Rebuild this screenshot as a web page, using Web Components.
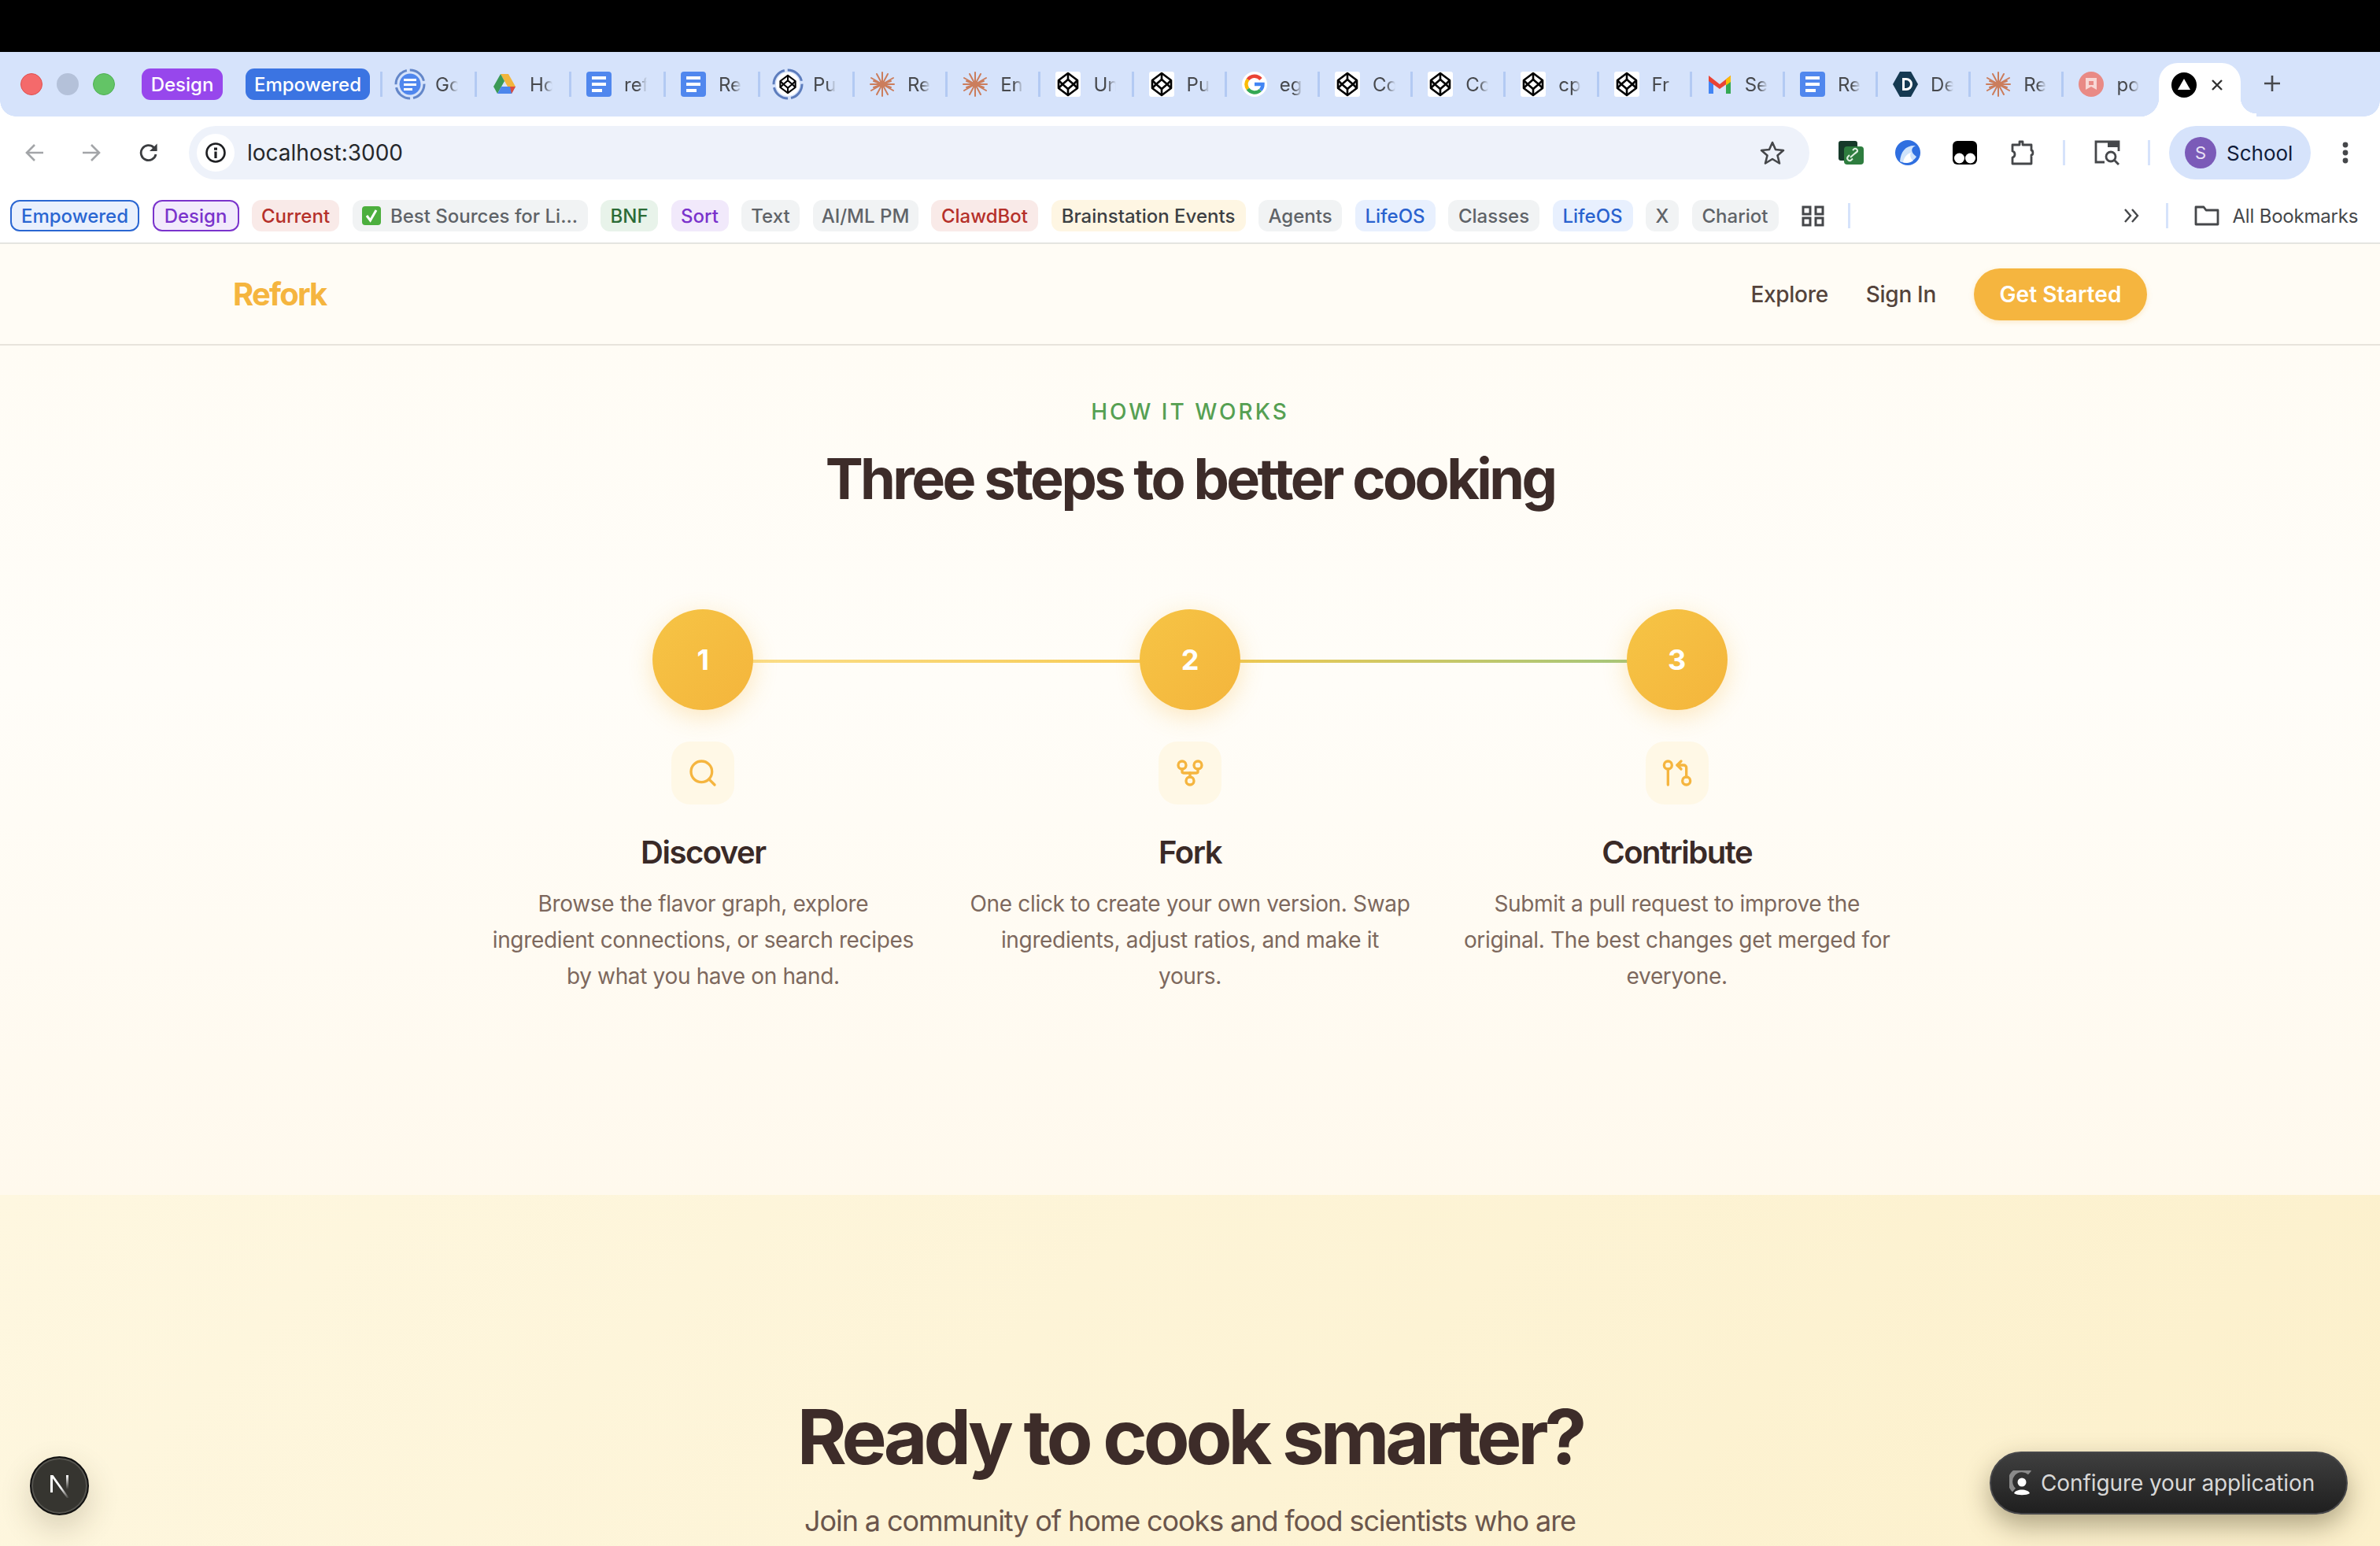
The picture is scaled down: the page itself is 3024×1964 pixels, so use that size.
<!DOCTYPE html>
<html>
<head>
<meta charset="utf-8">
<title>Refork</title>
<style>
    html,body{ margin:0; padding:0; background:#000; }
    body{ width:3024px; height:1964px; overflow:hidden; font-family:Inter,"Noto Sans",sans-serif; position:relative; }
    .top{ height:66px; background:#000; }
</style>
</head>
<body>
<div class="top"></div>
<browser-tabs>
    <win-dots></win-dots>
    <group-chip color="#9747ec" w="103">Design</group-chip>
    <group-chip color="#3b74e2" w="158" gap="29">Empowered</group-chip>
    <browser-tab icon="gdoc" w="120" first>Google</browser-tab>
    <browser-tab icon="drive" w="120">Home</browser-tab>
    <browser-tab icon="doc" w="120">ref</browser-tab>
    <browser-tab icon="doc" w="120">Re</browser-tab>
    <browser-tab icon="ringpen" w="120">Pu</browser-tab>
    <browser-tab icon="claude" w="118.2">Re</browser-tab>
    <browser-tab icon="claude" w="118.2">En</browser-tab>
    <browser-tab icon="pen" w="118.2">Un</browser-tab>
    <browser-tab icon="pen" w="118.2">Pu</browser-tab>
    <browser-tab icon="google" w="118.2">eg</browser-tab>
    <browser-tab icon="pen" w="118.2">Co</browser-tab>
    <browser-tab icon="pen" w="118.2">Co</browser-tab>
    <browser-tab icon="pen" w="118.2">cp</browser-tab>
    <browser-tab icon="pen" w="118.2">Fr</browser-tab>
    <browser-tab icon="gmail" w="118.2">Se</browser-tab>
    <browser-tab icon="doc" w="118.2">Re</browser-tab>
    <browser-tab icon="dhex" w="118.2">De</browser-tab>
    <browser-tab icon="claude" w="118.2">Re</browser-tab>
    <browser-tab icon="pink" w="118.2">po</browser-tab>
    <active-tab></active-tab>
</browser-tabs>
<browser-toolbar url="localhost:3000" profile="School"></browser-toolbar>
<bookmark-bar>
    <book-mark kind="oblue" w="164">Empowered</book-mark>
    <book-mark kind="opurple" w="110">Design</book-mark>
    <book-mark kind="red" w="111">Current</book-mark>
    <book-mark kind="gray" w="299" check>Best Sources for Li...</book-mark>
    <book-mark kind="green" w="73">BNF</book-mark>
    <book-mark kind="purple" w="73">Sort</book-mark>
    <book-mark kind="gray" w="74">Text</book-mark>
    <book-mark kind="gray" w="134">AI/ML PM</book-mark>
    <book-mark kind="red" w="136">ClawdBot</book-mark>
    <book-mark kind="yellow" w="247">Brainstation Events</book-mark>
    <book-mark kind="gray" w="106">Agents</book-mark>
    <book-mark kind="blue" w="102">LifeOS</book-mark>
    <book-mark kind="gray" w="116">Classes</book-mark>
    <book-mark kind="blue" w="102">LifeOS</book-mark>
    <book-mark kind="gray" w="42">X</book-mark>
    <book-mark kind="gray" w="110">Chariot</book-mark>
</bookmark-bar>
<site-header></site-header>
<how-it-works>
    <step-card num="1" icon="search" title="Discover">Browse the flavor graph, explore<br>ingredient connections, or search recipes<br>by what you have on hand.</step-card>
    <step-card num="2" icon="fork" title="Fork">One click to create your own version. Swap<br>ingredients, adjust ratios, and make it<br>yours.</step-card>
    <step-card num="3" icon="pull" title="Contribute">Submit a pull request to improve the<br>original. The best changes get merged for<br>everyone.</step-card>
</how-it-works>
<cta-section></cta-section>
<dev-badge></dev-badge>
<config-pill>Configure your application</config-pill>

<script>
// favicons, all drawn on a 32 box
const penPaths = `<rect width="32" height="32" rx="3" fill="#fff"/><g fill="none" stroke="#000" stroke-width="2.6" stroke-linejoin="round"><path d="M16 2 28 11V21L16 30 4 21V11Z"/><path d="M16 10 23 16 16 22 9 16Z"/><path d="M16 2V10M16 22V30M4 11 9 16M28 11 23 16M4 21 9 16M28 21 23 16"/></g>`;
const favicons = {
    doc:`<rect width="32" height="32" rx="4" fill="#5087ee"/><path d="M7 6H25V10H7ZM7 14H25V18H7ZM7 22H20V26H7Z" fill="#fff"/>`,
    gdoc:`<svg x="-4" y="-4" width="40" height="40" viewBox="0 0 40 40"><circle cx="20" cy="20" r="18" fill="none" stroke="#6487c9" stroke-width="3" stroke-dasharray="24 4"/><circle cx="20" cy="20" r="13.5" fill="#5087ee"/><path d="M12 13H28V16H12ZM12 19H28V22H12ZM12 25H23V28H12Z" fill="#fff"/></svg>`,
    drive:`<path d="M11 3H21L30 19H20Z" fill="#f2b53b"/><path d="M11 3 2 19 7 28 16 12Z" fill="#3b9a55"/><path d="M7 28H25L30 19H12Z" fill="#4c86ec"/><path d="M25 28 30 19H23Z" fill="#df4b3c"/>`,
    claude:`<g stroke="#cb7d5c" stroke-width="2" stroke-linecap="round"><path d="M16 1V31M9 3 23 29M23 3 9 29M2 8 30 24M30 8 2 24M1 16H31M5 12 27 20M27 12 5 20"/></g>`,
    pen:penPaths,
    ringpen:`<svg x="-4" y="-4" width="40" height="40" viewBox="0 0 40 40"><circle cx="20" cy="20" r="18" fill="none" stroke="#5d7dbd" stroke-width="3" stroke-dasharray="24 4"/><svg x="4" y="4" width="32" height="32" viewBox="0 0 32 32"><circle cx="16" cy="16" r="15" fill="#fff"/><g transform="translate(3.2 3.2) scale(.8)">${penPaths.replace(/<rect[^>]*>/,'')}</g></svg></svg>`,
    google:`<circle cx="16" cy="16" r="16" fill="#fff"/><g fill="none" stroke-width="4.4"><path d="M24 9.5A10.5 10.5 0 0 0 7.5 10" stroke="#ea4335"/><path d="M7.5 10A10.5 10.5 0 0 0 7.5 22" stroke="#fbbc05"/><path d="M7.5 22A10.5 10.5 0 0 0 23.5 23.5" stroke="#34a853"/><path d="M23.5 23.5C25.5 21.5 26.5 19 26.5 16H16" stroke="#4285f4"/></g>`,
    gmail:`<path d="M2 8V28H8V14Z" fill="#4285f4"/><path d="M30 8V28H24V14Z" fill="#34a853"/><path d="M2 5 16 16 30 5V12L16 22 2 12Z" fill="#ea4335"/><path d="M24 9.7 30 5V13L24 17.5Z" fill="#fbbc05"/>`,
    dhex:`<path d="M9 0H23L32 16 23 32H9L0 16Z" fill="#163a52"/><path d="M12 8H17A8 8 0 0 1 17 24H12ZM15 11V21H17A5 5 0 0 0 17 11Z" fill="#fff"/>`,
    pink:`<circle cx="16" cy="16" r="16" fill="#e98a85"/><path d="M9 8H23V23L16 19 9 23Z" fill="#f8d8d5"/><path d="M13 12H19V17H13Z" fill="#e98a85"/>`
};
function favicon(name){
    return `<svg width="32" height="32" viewBox="0 0 32 32" style="overflow:visible;display:block">${favicons[name]}</svg>`;
}

class WinDots extends HTMLElement{
    constructor(){
        super();
        this.attachShadow({mode:'open'}).innerHTML = `
        <style>
            :host{ display:flex; gap:18px; margin:0 34px 0 26px; align-items:center; }
            i{ display:block; width:28px; height:28px; border-radius:50%; box-sizing:border-box; }
            .r{ background:#f46a6b; border:1px solid #e0504e; }
            .g{ background:#b4c1d9; }
            .v{ background:#63c466; border:1px solid #4fb054; }
        </style>
        <i class="r"></i><i class="g"></i><i class="v"></i>`;
    }
}
customElements.define('win-dots', WinDots);

class GroupChip extends HTMLElement{
    constructor(){
        super();
        this.attachShadow({mode:'open'}).innerHTML = `
        <style>
            :host{ display:flex; align-items:center; justify-content:center; height:40px; border-radius:11px; color:#fff; font-size:24px; font-weight:500; flex:none; }
        </style>
        <slot></slot>`;
    }
    connectedCallback(){
        this.style.background = this.getAttribute('color');
        this.style.width = this.getAttribute('w') + 'px';
        if(this.hasAttribute('gap')) this.style.marginLeft = this.getAttribute('gap') + 'px';
    }
}
customElements.define('group-chip', GroupChip);

class BrowserTab extends HTMLElement{
    constructor(){
        super();
        this.attachShadow({mode:'open'}).innerHTML = `
        <style>
            :host{ display:flex; align-items:center; height:32px; flex:none; box-sizing:border-box; border-left:3px solid #b3caf3; padding-left:19px; color:#47494d; font-size:24px; }
            #ic{ width:32px; height:32px; flex:none; margin-right:16px; }
            #lb{ width:29px; overflow:hidden; white-space:nowrap; -webkit-mask-image:linear-gradient(90deg,#000 60%,transparent); mask-image:linear-gradient(90deg,#000 60%,transparent); }
        </style>
        <div id="ic"></div><div id="lb"><slot></slot></div>`;
    }
    connectedCallback(){
        this.style.width = this.getAttribute('w') + 'px';
        this.shadowRoot.getElementById('ic').innerHTML = favicon(this.getAttribute('icon'));
        if(this.hasAttribute('first')) this.style.marginLeft = '13px';
    }
}
customElements.define('browser-tab', BrowserTab);

class ActiveTab extends HTMLElement{
    constructor(){
        super();
        this.attachShadow({mode:'open'}).innerHTML = `
        <style>
            :host{ position:relative; display:flex; align-items:flex-start; align-self:flex-end; box-sizing:border-box; width:104px; height:68px; margin-left:5px; padding:12px 0 0 16px; background:#fff; border-radius:24px 24px 0 0; flex:none; }
            :host::before,:host::after{ content:""; position:absolute; bottom:0; width:24px; height:24px; }
            :host::before{ left:-24px; background:radial-gradient(circle at 0 0,transparent 24px,#fff 24.5px); }
            :host::after{ right:-20px; width:20px; background:radial-gradient(circle at 100% 0,transparent 20px,#fff 20.5px); }
            .plus{ position:absolute; left:132px; top:14px; }
            svg{ display:block; flex:none; }
            .x{ margin:8px 0 0 18px; }
        </style>
        <svg width="32" height="32" viewBox="0 0 32 32"><circle cx="16" cy="16" r="16" fill="#000"/><path d="M16 8 24 22H8Z" fill="#fff"/></svg>
        <svg class="x" width="16" height="16" viewBox="0 0 16 16"><path d="M2 2 14 14M14 2 2 14" stroke="#333" stroke-width="2.4"/></svg>
        <svg class="plus" width="24" height="24" viewBox="0 0 24 24"><path d="M12 2V22M2 12H22" stroke="#47494d" stroke-width="2.6"/></svg>`;
    }
}
customElements.define('active-tab', ActiveTab);

class BrowserTabs extends HTMLElement{
    constructor(){
        super();
        this.attachShadow({mode:'open'}).innerHTML = `
        <style>
            :host{ display:flex; align-items:center; height:82px; background:#d6e3fb; box-sizing:border-box; }
        </style>
        <slot></slot>`;
    }
}
customElements.define('browser-tabs', BrowserTabs);

class BrowserToolbar extends HTMLElement{
    constructor(){
        super();
        this.attachShadow({mode:'open'}).innerHTML = `
        <style>
            :host{ display:flex; align-items:center; height:80px; box-sizing:border-box; padding:12px 0 0 32px; background:#fff; position:relative; }
            :host::before{ content:""; position:absolute; inset:-20px 0 auto 0; height:20px; pointer-events:none;
                background:radial-gradient(circle at 20px 0,transparent 19.5px,#fff 20px) left bottom/20px 20px no-repeat,
                           radial-gradient(circle at 0 0,transparent 19.5px,#fff 20px) right bottom/20px 20px no-repeat; }
            svg{ display:block; flex:none; }
            .bar{ display:flex; align-items:center; width:2059px; height:68px; box-sizing:border-box; margin-left:39px; padding:0 31px 0 10px; background:#eef2fa; border-radius:34px; flex:none; }
            .info{ width:48px; height:48px; border-radius:50%; background:#fff; display:flex; align-items:center; justify-content:center; flex:none; margin-right:16px; }
            .url{ font-size:28px; color:#26282b; flex:1; }
            .ext{ display:flex; align-items:center; }
            .sep{ width:3px; height:32px; background:#d6e3fb; flex:none; }
            .prof{ display:flex; align-items:center; width:180px; height:68px; box-sizing:border-box; padding-left:20px; margin-left:24px; border-radius:34px; background:#d6e3fb; color:#101c3a; font-size:26px; flex:none; }
            .av{ width:40px; height:40px; border-radius:50%; background:#7b5bb8; color:#e9e2f5; font-size:22px; display:flex; align-items:center; justify-content:center; margin-right:13px; flex:none; }
        </style>
        <svg width="24" height="24" viewBox="0 0 24 24"><path d="M23 12H2M12 2 2 12 12 22" fill="none" stroke="#a3a5a8" stroke-width="2.6"/></svg>
        <svg style="margin-left:48px" width="24" height="24" viewBox="0 0 24 24"><path d="M1 12H22M12 2 22 12 12 22" fill="none" stroke="#a3a5a8" stroke-width="2.6"/></svg>
        <svg style="margin-left:49px" width="24" height="26" viewBox="0 0 24 26"><path d="M21 15A9.5 9.5 0 1 1 18.5 6.5L21.5 9.5" fill="none" stroke="#3b3d40" stroke-width="2.8"/><path d="M22.6 1.5V11H13Z" fill="#3b3d40"/></svg>
        <div class="bar">
            <div class="info"><svg width="26" height="26" viewBox="0 0 26 26"><circle cx="13" cy="13" r="11.5" fill="none" stroke="#1e1f22" stroke-width="2.6"/><path d="M11 6.5H15V9.8H11ZM11.4 11.5H14.6V20H11.4Z" fill="#1e1f22"/></svg></div>
            <div class="url" id="url"></div>
            <svg width="32" height="32" viewBox="0 0 32 32"><path d="M16 3 20 12 30 13 22.5 19.5 25 29.5 16 24 7 29.5 9.5 19.5 2 13 12 12Z" fill="none" stroke="#45474a" stroke-width="2.6" stroke-linejoin="round"/></svg>
        </div>
        <div class="ext" style="margin-left:37px">
            <svg width="32" height="30" viewBox="0 0 32 30"><rect x="0" y="0" width="24" height="25" rx="3" fill="#163a2a"/><rect x="7" y="7" width="25" height="23" rx="4" fill="#2e7d3f"/><path d="M15 21 24 13M14 18 12 20A3 3 0 0 0 16.5 24L18 22.5M21 16 24 13.5A3 3 0 0 0 20 10L18 12" fill="none" stroke="#dff0e2" stroke-width="2"/></svg>
            <svg style="margin-left:40px" width="32" height="32" viewBox="0 0 32 32"><circle cx="16" cy="16" r="16" fill="#2f6fe0"/><path d="M6 27C7 14 14 6 26 7 19 10 20 16 27 21 23 28 13 31 6 27Z" fill="#cfe3fb"/><path d="M10 28C12 20 16 17 20 16 18 20 20 24 23 26 19 29 14 30 10 28Z" fill="#fff"/></svg>
            <svg style="margin-left:41px" width="31" height="30" viewBox="0 0 31 30"><rect width="31" height="30" rx="6" fill="#000"/><circle cx="8.5" cy="22" r="6.5" fill="#fff"/><circle cx="22.5" cy="22" r="6.5" fill="#fff"/></svg>
            <svg style="margin-left:42px" width="31" height="32" viewBox="0 0 31 32"><path d="M3 6H12V2H16V6H27V13C29.5 13 29.5 19 27 19V30H3V22C7 21 7 15 3 14Z" fill="none" stroke="#45474a" stroke-width="2.8" stroke-linejoin="round"/></svg>
        </div>
        <div class="sep" style="margin-left:36px"></div>
        <svg style="margin-left:36px" width="35" height="32" viewBox="0 0 35 32"><path d="M14 28H3V2H32V14" fill="none" stroke="#45474a" stroke-width="2.8"/><path d="M18 2H32V9H18Z" fill="#45474a"/><circle cx="22" cy="21" r="6" fill="none" stroke="#45474a" stroke-width="2.8"/><path d="M26.5 25.5 32 31" stroke="#45474a" stroke-width="2.8"/></svg>
        <div class="sep" style="margin-left:34px"></div>
        <div class="prof"><div class="av">S</div><span id="pn"></span></div>
        <svg style="margin-left:36px" width="16" height="32" viewBox="0 0 16 32"><circle cx="8" cy="6" r="3.4" fill="#45474a"/><circle cx="8" cy="16" r="3.4" fill="#45474a"/><circle cx="8" cy="26" r="3.4" fill="#45474a"/></svg>`;
    }
    connectedCallback(){
        this.shadowRoot.getElementById('url').textContent = this.getAttribute('url');
        this.shadowRoot.getElementById('pn').textContent = this.getAttribute('profile');
    }
}
customElements.define('browser-toolbar', BrowserToolbar);

class BookMark extends HTMLElement{
    constructor(){
        super();
        this.attachShadow({mode:'open'}).innerHTML = `
        <style>
            :host{ display:flex; align-items:center; justify-content:center; height:40px; box-sizing:border-box; border-radius:12px; font-size:24px; font-weight:500; flex:none; white-space:nowrap; }
            :host([kind=oblue]){ background:#e9f0fd; color:#2a66d2; border:2px solid #2a66d2; }
            :host([kind=opurple]){ background:#f2eafc; color:#7a33cc; border:2px solid #7a33cc; }
            :host([kind=red]){ background:#f9eae8; color:#b5302a; }
            :host([kind=gray]){ background:#f1f3f4; color:#5f6368; }
            :host([kind=green]){ background:#e8f3ea; color:#2b6b36; }
            :host([kind=purple]){ background:#f1e9fb; color:#7a33cc; }
            :host([kind=yellow]){ background:#fef6e3; color:#3c4043; }
            :host([kind=blue]){ background:#e8f0fe; color:#2a62cf; }
            svg{ display:none; margin-right:12px; flex:none; }
            :host([check]) svg{ display:block; }
        </style>
        <svg width="24" height="24" viewBox="0 0 24 24"><rect width="24" height="24" rx="4" fill="#4caf3e"/><path d="M6 12 10.5 18 18 5" fill="none" stroke="#fff" stroke-width="3"/></svg>
        <slot></slot>`;
    }
    connectedCallback(){
        this.style.width = this.getAttribute('w') + 'px';
    }
}
customElements.define('book-mark', BookMark);

class BookmarkBar extends HTMLElement{
    constructor(){
        super();
        this.attachShadow({mode:'open'}).innerHTML = `
        <style>
            :host{ display:flex; align-items:center; height:82px; box-sizing:border-box; padding:12px 0 0 13px; background:#fff; gap:16.5px; border-bottom:2px solid #e5e5e0; }
            svg{ display:block; flex:none; }
            .sep{ width:3px; height:32px; background:#d6e3fb; flex:none; }
            .all{ font-size:24px; color:#45474a; white-space:nowrap; letter-spacing:-.2px; }
        </style>
        <slot></slot>
        <svg style="margin-left:13px" width="29" height="27" viewBox="0 0 29 27"><path d="M2 2H11V11H2ZM18 2H27V11H18ZM2 16H11V25H2ZM18 16H27V25H18Z" fill="none" stroke="#45474a" stroke-width="3"/></svg>
        <div class="sep" style="margin-left:13px"></div>
        <svg style="margin-left:331px" width="20" height="20" viewBox="0 0 20 20"><path d="M2 2 9 10 2 18M11 2 18 10 11 18" fill="none" stroke="#45474a" stroke-width="2.4"/></svg>
        <div class="sep" style="margin-left:17px"></div>
        <svg style="margin-left:17px" width="32" height="26" viewBox="0 0 32 26"><path d="M2 2H12L15 6H30V24H2Z" fill="none" stroke="#45474a" stroke-width="2.8" stroke-linejoin="round"/></svg>
        <div class="all">All Bookmarks</div>`;
    }
}
customElements.define('bookmark-bar', BookmarkBar);

class SiteHeader extends HTMLElement{
    constructor(){
        super();
        this.attachShadow({mode:'open'}).innerHTML = `
        <style>
            :host{ display:block; background:#fffcf5; border-bottom:2px solid #e8e4dc; }
            .in{ display:flex; align-items:center; justify-content:space-between; box-sizing:border-box; width:2560px; height:127px; margin:0 auto; padding:0 64px; }
            .logo{ font-size:40px; font-weight:700; color:#f5b53f; letter-spacing:-1.8px; }
            nav{ display:flex; align-items:center; gap:48px; font-size:28px; font-weight:500; color:#54433b; letter-spacing:-.3px; }
            .btn{ display:flex; align-items:center; justify-content:center; width:220px; height:66px; border-radius:33px; background:#f5b53f; color:#fff; font-weight:600; letter-spacing:.1px; box-shadow:0 2px 6px rgba(245,181,63,.25); }
        </style>
        <div class="in">
            <div class="logo">Refork</div>
            <nav><span>Explore</span><span>Sign In</span><div class="btn">Get Started</div></nav>
        </div>`;
    }
}
customElements.define('site-header', SiteHeader);

const stepIcons = {
    search:`<circle cx="11" cy="11" r="8"/><path d="m21 21-4.3-4.3"/>`,
    fork:`<circle cx="12" cy="18" r="3"/><circle cx="6" cy="6" r="3"/><circle cx="18" cy="6" r="3"/><path d="M18 9v2c0 .6-.4 1-1 1H7c-.6 0-1-.4-1-1V9"/><path d="M12 12v3"/>`,
    pull:`<circle cx="5" cy="6" r="3"/><path d="M5 9v12"/><circle cx="19" cy="18" r="3"/><path d="m15 9-3-3 3-3"/><path d="M12 6h5a2 2 0 0 1 2 2v7"/>`
};

class StepCard extends HTMLElement{
    constructor(){
        super();
        this.attachShadow({mode:'open'}).innerHTML = `
        <style>
            :host{ display:flex; flex-direction:column; align-items:center; text-align:center; position:relative; z-index:1; min-width:0; }
            .num{ width:128px; height:128px; border-radius:50%; background:linear-gradient(135deg,#f6c445,#f4b53c); color:#fff; font-size:36px; font-weight:700; display:flex; align-items:center; justify-content:center; box-shadow:0 8px 30px rgba(245,181,60,.3); }
            .ico{ width:80px; height:80px; margin-top:40px; border-radius:24px; background:#fff8e6; display:flex; align-items:center; justify-content:center; }
            svg{ display:block; fill:none; stroke:#f5b53f; stroke-width:2; stroke-linecap:round; stroke-linejoin:round; }
            h3{ margin:31px 0 0; font-size:40px; line-height:60px; font-weight:600; color:#3a2a27; letter-spacing:-1.5px; }
            p{ margin:13px 0 0; font-size:28px; line-height:45.8px; color:#7d685d; white-space:nowrap; letter-spacing:-.34px; }
        </style>
        <div class="num" id="num"></div>
        <div class="ico" id="ico"></div>
        <h3 id="ttl"></h3>
        <p><slot></slot></p>`;
    }
    connectedCallback(){
        const r = this.shadowRoot;
        r.getElementById('num').textContent = this.getAttribute('num');
        r.getElementById('ttl').textContent = this.getAttribute('title');
        r.getElementById('ico').innerHTML = `<svg width="40" height="40" viewBox="0 0 24 24">${stepIcons[this.getAttribute('icon')]}</svg>`;
    }
}
customElements.define('step-card', StepCard);

class HowItWorks extends HTMLElement{
    constructor(){
        super();
        this.attachShadow({mode:'open'}).innerHTML = `
        <style>
            :host{ display:block; box-sizing:border-box; height:1079px; padding-top:64px; background:linear-gradient(180deg,#fffcf5,#fffdf8 40%,#fff9ed); text-align:center; }
            .eyebrow{ font-size:28px; line-height:40px; font-weight:500; letter-spacing:3px; color:#56a052; }
            h2{ margin:25px 0 0; font-size:72px; line-height:80px; font-weight:700; letter-spacing:-3.6px; color:#3d2c29; }
            .grid{ position:relative; display:grid; grid-template-columns:repeat(3,minmax(0,1fr)); gap:64px; width:1792px; margin:126px auto 0; }
            .line{ position:absolute; left:277px; right:277px; top:64px; height:4px; background:linear-gradient(90deg,#fbe08f,#f6c94f 50%,#9cc67f); }
        </style>
        <div class="eyebrow">HOW IT WORKS</div>
        <h2>Three steps to better cooking</h2>
        <div class="grid"><div class="line"></div><slot></slot></div>`;
    }
}
customElements.define('how-it-works', HowItWorks);

class CtaSection extends HTMLElement{
    constructor(){
        super();
        this.attachShadow({mode:'open'}).innerHTML = `
        <style>
            :host{ display:block; height:446px; overflow:hidden; box-sizing:border-box; padding-top:254px; background:linear-gradient(135deg,#fef7e0,#fcf0cb); text-align:center; }
            h2{ margin:0; font-size:96px; line-height:106px; font-weight:700; letter-spacing:-5px; color:#3d2c29; }
            p{ margin:25px 0 0; font-size:36px; line-height:58px; color:#6b564c; letter-spacing:-1.1px; }
        </style>
        <h2>Ready to cook smarter?</h2>
        <p>Join a community of home cooks and food scientists who are</p>`;
    }
}
customElements.define('cta-section', CtaSection);

class DevBadge extends HTMLElement{
    constructor(){
        super();
        this.attachShadow({mode:'open'}).innerHTML = `
        <style>
            :host{ position:absolute; left:38px; top:1850px; width:75px; height:75px; box-sizing:border-box; border-radius:50%; background:#363530; border:2px solid #111; box-shadow:inset 0 0 0 2px #55544f,0 16px 40px rgba(60,50,20,.2); display:flex; align-items:center; justify-content:center; }
            svg{ display:block; }
        </style>
        <svg width="30" height="32" viewBox="0 0 30 32">
            <defs>
                <linearGradient id="a" x1="0" y1="0" x2="1" y2="1"><stop offset=".55" stop-color="#fff"/><stop offset="1" stop-color="#fff" stop-opacity="0"/></linearGradient>
                <linearGradient id="b" x1="0" y1="0" x2="0" y2="1"><stop offset="0" stop-color="#fff"/><stop offset="1" stop-color="#fff" stop-opacity="0"/></linearGradient>
            </defs>
            <path d="M3 2H6V24H3Z" fill="#fff"/>
            <path d="M3 2H6.5L27 31H24Z" fill="url(#a)"/>
            <rect x="23" y="2" width="3" height="18" fill="url(#b)"/>
        </svg>`;
    }
}
customElements.define('dev-badge', DevBadge);

class ConfigPill extends HTMLElement{
    constructor(){
        super();
        this.attachShadow({mode:'open'}).innerHTML = `
        <style>
            :host{ position:absolute; left:2528px; top:1844px; width:455px; height:80px; box-sizing:border-box; padding-left:23px; border-radius:40px; border:2px solid #47474a; background:linear-gradient(180deg,#3f3f3f,#1f1f1f); box-shadow:0 14px 34px rgba(60,50,20,.4); display:flex; align-items:center; color:#d8d8d8; font-size:28px; letter-spacing:-.1px; white-space:nowrap; }
            svg{ display:block; margin-right:12px; flex:none; }
        </style>
        <svg width="28" height="32" viewBox="0 0 28 32"><path d="M26 3A13.5 13.5 0 0 0 6 25" fill="none" stroke="#8a8a8a" stroke-width="6"/><circle cx="16" cy="15" r="5.5" fill="#fff"/><path d="M6 29C8 23 24 23 26 29 22 32 10 32 6 29Z" fill="#fff"/></svg>
        <slot></slot>`;
    }
}
customElements.define('config-pill', ConfigPill);
</script>
</body>
</html>
